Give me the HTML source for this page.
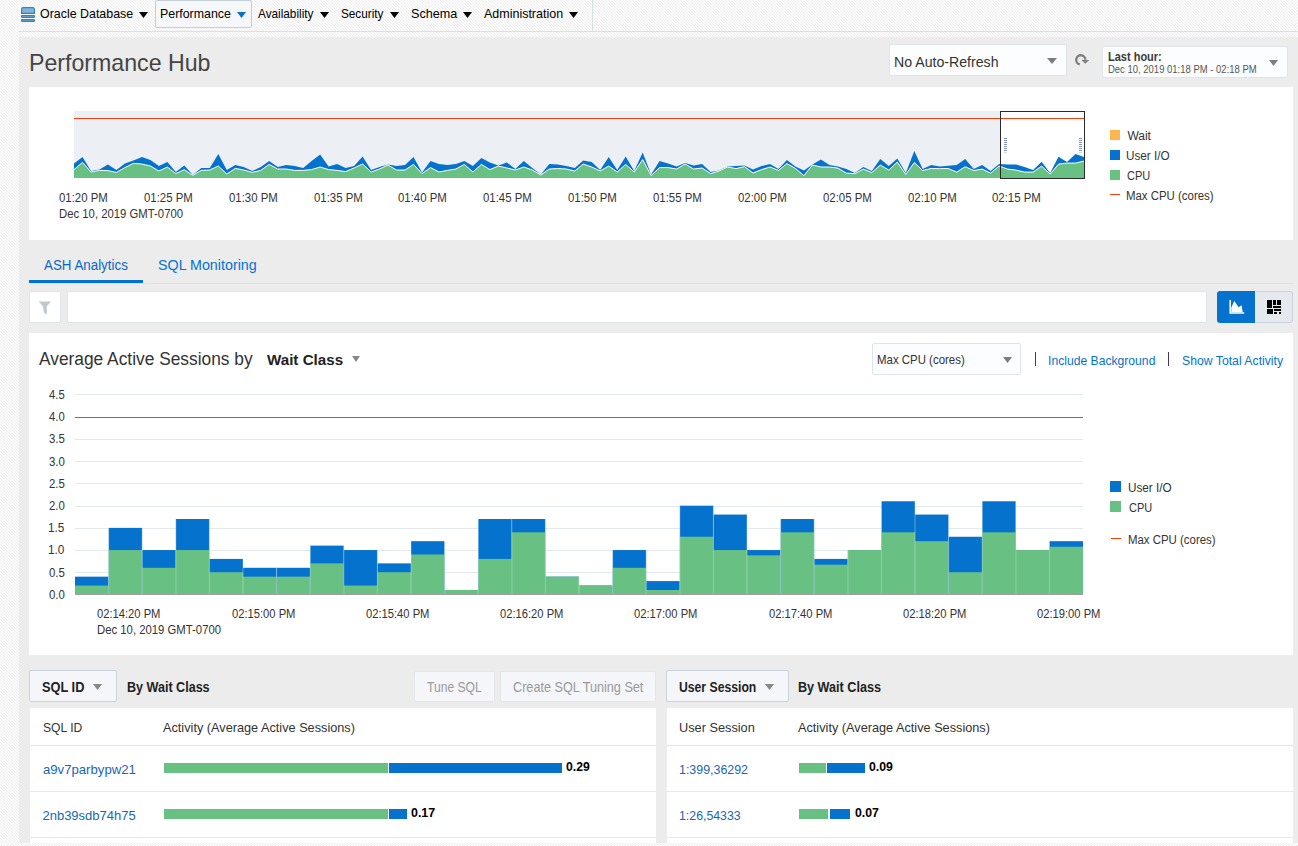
<!DOCTYPE html>
<html><head><meta charset="utf-8"><style>
html,body{margin:0;padding:0;width:1298px;height:846px;overflow:hidden;background:#fbfbfb}
.t{position:absolute;white-space:nowrap;line-height:1;font-family:"Liberation Sans",sans-serif;transform-origin:0 0}
.r{position:absolute;box-sizing:content-box}
</style></head><body>
<svg class="r" style="left:0;top:0" width="1298" height="846"><defs><pattern id="hat" width="3" height="3" patternUnits="userSpaceOnUse"><rect width="3" height="3" fill="#fcfcfc"/><rect x="2" y="0" width="1" height="1" fill="#ededed"/><rect x="0" y="1" width="1" height="1" fill="#ededed"/><rect x="1" y="2" width="1" height="1" fill="#ededed"/></pattern></defs><rect width="1298" height="846" fill="url(#hat)"/></svg>
<div class="r" style="left:19px;top:31px;width:1279px;height:1px;background:#d9e1e8;"></div>
<div class="r" style="left:592px;top:0px;width:1px;height:31px;background:#d9e1e8;"></div>
<svg class="r" style="left:21px;top:7px" width="14" height="15" viewBox="0 0 14 15"><path d="M0.6,6.4 L0.6,2.2 Q0.6,0.6 2.4,0.6 L11.6,0.6 Q13.4,0.6 13.4,2.2 L13.4,6.4 Z" fill="#7fb2e5" stroke="#38879f" stroke-width="1.2"/><rect x="0.6" y="8.6" width="12.8" height="1.7" rx="0.6" fill="#7fb2e5" stroke="#38879f" stroke-width="1.2"/><rect x="0.6" y="12.7" width="12.8" height="1.7" rx="0.6" fill="#7fb2e5" stroke="#38879f" stroke-width="1.2"/></svg>
<div class="t" style="left:39.52px;top:6.95px;font-size:13px;color:#000;transform:scaleX(0.9554);">Oracle Database</div>
<svg class="r" style="left:139px;top:12px" width="9" height="6"><polygon points="0,0 9,0 4.5,6" fill="#000"/></svg>
<div class="r" style="left:155px;top:0px;width:95px;height:26px;background:#f6f7f9;border:1px solid #c4ced7;border-radius:2px"></div>
<div class="t" style="left:159.55px;top:6.95px;font-size:13px;color:#000;transform:scaleX(0.9521);">Performance</div>
<svg class="r" style="left:237px;top:12px" width="9" height="6"><polygon points="0,0 9,0 4.5,6" fill="#0572ce"/></svg>
<div class="t" style="left:258.00px;top:6.95px;font-size:13px;color:#000;transform:scaleX(0.9061);">Availability</div>
<svg class="r" style="left:320px;top:12px" width="9" height="6"><polygon points="0,0 9,0 4.5,6" fill="#000"/></svg>
<div class="t" style="left:341.25px;top:6.95px;font-size:13px;color:#000;transform:scaleX(0.9032);">Security</div>
<svg class="r" style="left:390px;top:12px" width="9" height="6"><polygon points="0,0 9,0 4.5,6" fill="#000"/></svg>
<div class="t" style="left:410.52px;top:6.95px;font-size:13px;color:#000;transform:scaleX(0.9693);">Schema</div>
<svg class="r" style="left:463px;top:12px" width="9" height="6"><polygon points="0,0 9,0 4.5,6" fill="#000"/></svg>
<div class="t" style="left:484.00px;top:6.95px;font-size:13px;color:#000;transform:scaleX(0.9602);">Administration</div>
<svg class="r" style="left:569px;top:12px" width="9" height="6"><polygon points="0,0 9,0 4.5,6" fill="#000"/></svg>
<div class="r" style="left:19px;top:37px;width:1279px;height:806px;background:#ececec;"></div>
<div class="t" style="left:28.87px;top:50.60px;font-size:24px;color:#444;transform:scaleX(0.9649);">Performance Hub</div>
<div class="r" style="left:889px;top:44px;width:176px;height:30px;background:#fcfdfe;border:1px solid #dfe4e9;border-radius:2px"></div>
<div class="t" style="left:893.52px;top:53.55px;font-size:15px;color:#333;transform:scaleX(0.9425);">No Auto-Refresh</div>
<svg class="r" style="left:1047px;top:58px" width="10" height="6"><polygon points="0,0 10,0 5.0,6" fill="#7d7d7d"/></svg>
<svg class="r" style="left:1068px;top:48px" width="28" height="24" viewBox="0 0 28 24"><path d="M11.8,16.4 A4.6,4.6 0 1 1 17.4,11.6" fill="none" stroke="#808080" stroke-width="2.4"/><polygon points="13.4,12 21.2,12 17.3,15.8" fill="#808080"/></svg>
<div class="r" style="left:1102px;top:46px;width:184px;height:30px;background:#fcfdfe;border:1px solid #dfe4e9;border-radius:2px"></div>
<div class="t" style="left:1107.81px;top:50.60px;font-size:12px;color:#3a3a3a;font-weight:bold;transform:scaleX(0.9163);">Last hour:</div>
<div class="t" style="left:1107.64px;top:63.85px;font-size:11px;color:#555;transform:scaleX(0.8622);">Dec 10, 2019 01:18 PM - 02:18 PM</div>
<svg class="r" style="left:1269px;top:60px" width="9" height="6"><polygon points="0,0 9,0 4.5,6" fill="#7d7d7d"/></svg>
<div class="r" style="left:29px;top:87px;width:1264px;height:153px;background:#fff;"></div>
<div class="r" style="left:74px;top:111px;width:1010px;height:67px;background:#eceff4;"></div>
<div class="r" style="left:1000px;top:111px;width:84px;height:67px;background:#fff;"></div>
<svg class="r" style="left:74px;top:111px" width="1010" height="67"><polygon points="0.0,52.6 8.5,46.0 17.0,60.0 25.5,58.4 33.9,53.4 42.4,59.0 50.9,52.6 59.4,49.6 67.9,46.0 76.4,49.0 84.9,55.0 93.4,51.0 101.8,61.0 110.3,54.6 118.8,64.0 127.3,57.0 135.8,57.0 144.3,43.0 152.8,59.0 161.3,54.0 169.7,56.0 178.2,60.0 186.7,56.0 195.2,50.0 203.7,56.0 212.2,54.0 220.7,55.0 229.2,57.0 237.6,50.0 246.1,43.4 254.6,55.4 263.1,53.0 271.6,57.0 280.1,55.0 288.6,45.4 297.1,59.0 305.5,56.0 314.0,53.4 322.5,55.0 331.0,54.0 339.5,46.0 348.0,61.4 356.5,50.0 365.0,53.0 373.4,54.0 381.9,53.0 390.4,50.0 398.9,55.0 407.4,47.0 415.9,51.4 424.4,54.6 432.9,51.4 441.3,58.0 449.8,50.0 458.3,57.0 466.8,63.4 475.3,53.0 483.8,53.4 492.3,55.0 500.8,57.0 509.2,49.4 517.7,51.0 526.2,59.0 534.7,46.0 543.2,59.0 551.7,45.4 560.2,60.0 568.7,41.4 577.1,63.4 585.6,50.0 594.1,52.6 602.6,55.4 611.1,52.0 619.6,54.6 628.1,53.0 636.6,61.0 645.0,59.4 653.5,55.4 662.0,55.0 670.5,54.6 679.0,58.6 687.5,55.0 696.0,53.0 704.5,58.0 712.9,49.0 721.4,55.4 729.9,59.4 738.4,53.4 746.9,48.6 755.4,54.0 763.9,55.5 772.4,58.1 780.8,62.1 789.3,56.1 797.8,60.1 806.3,48.1 814.8,55.1 823.3,47.5 831.8,62.1 840.3,40.1 848.7,58.1 857.2,54.1 865.7,55.5 874.2,54.7 882.7,54.1 891.2,48.1 899.7,58.1 908.2,54.1 916.6,60.1 925.1,53.1 933.6,53.5 942.1,53.5 950.6,56.1 959.1,59.1 967.6,50.7 976.1,62.1 984.5,45.7 993.0,51.1 1001.5,43.1 1010.0,46.1 1010,67 0,67" fill="#0572ce"/><polygon points="0.0,58.6 8.5,51.4 17.0,61.0 25.5,59.4 33.9,59.6 42.4,61.4 50.9,56.6 59.4,52.4 67.9,53.0 76.4,55.0 84.9,60.0 93.4,56.0 101.8,62.6 110.3,58.6 118.8,64.4 127.3,59.4 135.8,59.0 144.3,55.0 152.8,63.0 161.3,57.4 169.7,59.0 178.2,61.4 186.7,59.4 195.2,53.4 203.7,58.0 212.2,58.0 220.7,59.4 229.2,59.4 237.6,58.6 246.1,56.0 254.6,58.6 263.1,59.4 271.6,60.6 280.1,57.0 288.6,53.0 297.1,61.0 305.5,58.0 314.0,54.0 322.5,59.0 331.0,59.0 339.5,53.4 348.0,62.6 356.5,56.6 365.0,61.0 373.4,59.4 381.9,58.0 390.4,53.4 398.9,61.0 407.4,53.4 415.9,58.6 424.4,55.0 432.9,57.0 441.3,59.0 449.8,56.0 458.3,59.0 466.8,64.0 475.3,58.0 483.8,57.6 492.3,58.0 500.8,60.0 509.2,53.0 517.7,56.0 526.2,60.0 534.7,55.0 543.2,61.0 551.7,53.4 560.2,61.0 568.7,48.6 577.1,64.6 585.6,56.6 594.1,56.6 602.6,58.0 611.1,53.0 619.6,58.0 628.1,57.0 636.6,62.6 645.0,60.0 653.5,56.0 662.0,57.6 670.5,55.6 679.0,62.0 687.5,58.6 696.0,56.0 704.5,59.4 712.9,52.6 721.4,57.4 729.9,64.6 738.4,54.0 746.9,56.0 755.4,56.0 763.9,57.1 772.4,62.1 780.8,62.7 789.3,58.1 797.8,61.5 806.3,54.1 814.8,59.1 823.3,51.1 831.8,63.5 840.3,51.5 848.7,59.5 857.2,57.5 865.7,57.7 874.2,57.5 882.7,61.1 891.2,55.7 899.7,59.5 908.2,58.1 916.6,62.1 925.1,55.1 933.6,58.1 942.1,59.1 950.6,61.1 959.1,61.1 967.6,55.1 976.1,63.1 984.5,53.1 993.0,52.1 1001.5,52.1 1010.0,50.1 1010,67 0,67" fill="#68c182"/><polyline points="0.0,58.6 8.5,51.4 17.0,61.0 25.5,59.4 33.9,59.6 42.4,61.4 50.9,56.6 59.4,52.4 67.9,53.0 76.4,55.0 84.9,60.0 93.4,56.0 101.8,62.6 110.3,58.6 118.8,64.4 127.3,59.4 135.8,59.0 144.3,55.0 152.8,63.0 161.3,57.4 169.7,59.0 178.2,61.4 186.7,59.4 195.2,53.4 203.7,58.0 212.2,58.0 220.7,59.4 229.2,59.4 237.6,58.6 246.1,56.0 254.6,58.6 263.1,59.4 271.6,60.6 280.1,57.0 288.6,53.0 297.1,61.0 305.5,58.0 314.0,54.0 322.5,59.0 331.0,59.0 339.5,53.4 348.0,62.6 356.5,56.6 365.0,61.0 373.4,59.4 381.9,58.0 390.4,53.4 398.9,61.0 407.4,53.4 415.9,58.6 424.4,55.0 432.9,57.0 441.3,59.0 449.8,56.0 458.3,59.0 466.8,64.0 475.3,58.0 483.8,57.6 492.3,58.0 500.8,60.0 509.2,53.0 517.7,56.0 526.2,60.0 534.7,55.0 543.2,61.0 551.7,53.4 560.2,61.0 568.7,48.6 577.1,64.6 585.6,56.6 594.1,56.6 602.6,58.0 611.1,53.0 619.6,58.0 628.1,57.0 636.6,62.6 645.0,60.0 653.5,56.0 662.0,57.6 670.5,55.6 679.0,62.0 687.5,58.6 696.0,56.0 704.5,59.4 712.9,52.6 721.4,57.4 729.9,64.6 738.4,54.0 746.9,56.0 755.4,56.0 763.9,57.1 772.4,62.1 780.8,62.7 789.3,58.1 797.8,61.5 806.3,54.1 814.8,59.1 823.3,51.1 831.8,63.5 840.3,51.5 848.7,59.5 857.2,57.5 865.7,57.7 874.2,57.5 882.7,61.1 891.2,55.7 899.7,59.5 908.2,58.1 916.6,62.1 925.1,55.1 933.6,58.1 942.1,59.1 950.6,61.1 959.1,61.1 967.6,55.1 976.1,63.1 984.5,53.1 993.0,52.1 1001.5,52.1 1010.0,50.1" fill="none" stroke="#fff" stroke-width="1"/><rect x="0" y="7" width="1010" height="1" fill="#f53d0e"/></svg>
<div class="r" style="left:1000px;top:111px;width:83px;height:66px;border:1px solid #2a2a2a"></div>
<svg class="r" style="left:1004px;top:138px" width="78" height="16" shape-rendering="crispEdges"><rect x="0" y="0" width="3" height="1" fill="#8391c9"/><rect x="75" y="0" width="3" height="1" fill="#8391c9"/><rect x="0" y="2" width="3" height="1" fill="#8391c9"/><rect x="75" y="2" width="3" height="1" fill="#8391c9"/><rect x="0" y="4" width="3" height="1" fill="#8391c9"/><rect x="75" y="4" width="3" height="1" fill="#8391c9"/><rect x="0" y="6" width="3" height="1" fill="#8391c9"/><rect x="75" y="6" width="3" height="1" fill="#8391c9"/><rect x="0" y="8" width="3" height="1" fill="#8391c9"/><rect x="75" y="8" width="3" height="1" fill="#8391c9"/><rect x="0" y="10" width="3" height="1" fill="#8391c9"/><rect x="75" y="10" width="3" height="1" fill="#8391c9"/><rect x="0" y="12" width="3" height="1" fill="#8391c9"/><rect x="75" y="12" width="3" height="1" fill="#8391c9"/><rect x="0" y="14" width="3" height="1" fill="#d6d8e0"/><rect x="75" y="14" width="3" height="1" fill="#d6d8e0"/></svg>
<div class="t" style="left:59.02px;top:191.50px;font-size:12px;color:#333;transform:scaleX(0.9500);">01:20 PM</div>
<div class="t" style="left:143.88px;top:191.50px;font-size:12px;color:#333;transform:scaleX(0.9500);">01:25 PM</div>
<div class="t" style="left:228.72px;top:191.50px;font-size:12px;color:#333;transform:scaleX(0.9500);">01:30 PM</div>
<div class="t" style="left:313.57px;top:191.50px;font-size:12px;color:#333;transform:scaleX(0.9500);">01:35 PM</div>
<div class="t" style="left:398.42px;top:191.50px;font-size:12px;color:#333;transform:scaleX(0.9500);">01:40 PM</div>
<div class="t" style="left:483.27px;top:191.50px;font-size:12px;color:#333;transform:scaleX(0.9500);">01:45 PM</div>
<div class="t" style="left:568.12px;top:191.50px;font-size:12px;color:#333;transform:scaleX(0.9500);">01:50 PM</div>
<div class="t" style="left:652.97px;top:191.50px;font-size:12px;color:#333;transform:scaleX(0.9500);">01:55 PM</div>
<div class="t" style="left:737.82px;top:191.50px;font-size:12px;color:#333;transform:scaleX(0.9500);">02:00 PM</div>
<div class="t" style="left:822.67px;top:191.50px;font-size:12px;color:#333;transform:scaleX(0.9500);">02:05 PM</div>
<div class="t" style="left:907.52px;top:191.50px;font-size:12px;color:#333;transform:scaleX(0.9500);">02:10 PM</div>
<div class="t" style="left:992.37px;top:191.50px;font-size:12px;color:#333;transform:scaleX(0.9500);">02:15 PM</div>
<div class="t" style="left:58.56px;top:207.80px;font-size:12px;color:#333;transform:scaleX(0.9438);">Dec 10, 2019 GMT-0700</div>
<div class="r" style="left:1110px;top:130px;width:10px;height:10px;background:#ffb54d;"></div>
<div class="r" style="left:1110px;top:150px;width:10px;height:10px;background:#0572ce;"></div>
<div class="r" style="left:1110px;top:170px;width:10px;height:10px;background:#68c182;"></div>
<div class="r" style="left:1110px;top:194px;width:10px;height:1px;background:#f53d0e;"></div>
<div class="t" style="left:1127.40px;top:129.50px;font-size:12px;color:#333;">Wait</div>
<div class="t" style="left:1126.42px;top:149.50px;font-size:12px;color:#333;transform:scaleX(0.9767);">User I/O</div>
<div class="t" style="left:1126.94px;top:169.50px;font-size:12px;color:#333;transform:scaleX(0.9167);">CPU</div>
<div class="t" style="left:1126.45px;top:189.50px;font-size:12px;color:#333;transform:scaleX(0.9518);">Max CPU (cores)</div>
<div class="t" style="left:44.40px;top:258.10px;font-size:14px;color:#0a68c4;transform:scaleX(0.9531);">ASH Analytics</div>
<div class="t" style="left:157.53px;top:258.10px;font-size:14px;color:#0572ce;transform:scaleX(1.0205);">SQL Monitoring</div>
<div class="r" style="left:29px;top:283px;width:1264px;height:1px;background:#d9e1e8;"></div>
<div class="r" style="left:29px;top:280px;width:114px;height:3px;background:#0572ce;"></div>
<div class="r" style="left:29px;top:291px;width:30px;height:30px;background:#fff;border:1px solid #dfe4e9;border-radius:2px"></div>
<svg class="r" style="left:38px;top:301px" width="14" height="14" viewBox="0 0 14 14"><path d="M0.6,0.5 L13.1,0.5 L8.8,5.3 L8.8,13 L7.4,13 L5.6,10.6 L5.1,5.6 Z" fill="#c2c8ce"/></svg>
<div class="r" style="left:67px;top:291px;width:1138px;height:30px;background:#fff;border:1px solid #dfe4e9;border-radius:2px"></div>
<div class="r" style="left:1217px;top:291px;width:38px;height:32px;background:#0572ce;border-radius:3px 0 0 3px"></div>
<div class="r" style="left:1255px;top:291px;width:37px;height:30px;background:#e5e9ee;border:1px solid #c9d3dc;border-left:none;border-radius:0 3px 3px 0"></div>
<svg class="r" style="left:1229px;top:299px" width="17" height="16" viewBox="0 0 17 16"><path d="M1.2,0.9 L1.2,14 L15.2,14" fill="none" stroke="#fff" stroke-width="1.5"/><path d="M2.3,13.3 L2.3,8.5 L5.3,2 L9.6,8.2 L12.6,6.2 L13.7,13.3 Z" fill="#fff"/></svg>
<svg class="r" style="left:1267px;top:300px" width="14" height="14" viewBox="0 0 14 14" shape-rendering="crispEdges"><rect x="0" y="0" width="5" height="8" fill="#000"/><rect x="6" y="0" width="3" height="4.5" fill="#000"/><rect x="10" y="0" width="4" height="4.5" fill="#000"/><rect x="6" y="5.5" width="8" height="2.2" fill="#000"/><rect x="0" y="9" width="6" height="5" fill="#000"/><rect x="7" y="9" width="7" height="2" fill="#000"/><rect x="7" y="12" width="3.2" height="2" fill="#000"/><rect x="11.8" y="12" width="2.2" height="2" fill="#000"/></svg>
<div class="r" style="left:29px;top:333px;width:1264px;height:322px;background:#fff;"></div>
<div class="t" style="left:39.40px;top:349.90px;font-size:18px;color:#333;transform:scaleX(0.9632);">Average Active Sessions by</div>
<div class="t" style="left:266.70px;top:351.95px;font-size:15px;color:#222;font-weight:bold;transform:scaleX(1.0100);">Wait Class</div>
<svg class="r" style="left:352px;top:356px" width="8" height="6"><polygon points="0,0 8,0 4.0,6" fill="#888"/></svg>
<div class="r" style="left:872px;top:343px;width:147px;height:30px;background:#fcfdfe;border:1px solid #dfe4e9;border-radius:2px"></div>
<div class="t" style="left:877.12px;top:352.95px;font-size:13px;color:#333;transform:scaleX(0.8798);">Max CPU (cores)</div>
<svg class="r" style="left:1003px;top:357px" width="9" height="6"><polygon points="0,0 9,0 4.5,6" fill="#7d7d7d"/></svg>
<div class="r" style="left:1035px;top:352px;width:1px;height:14px;background:#5a2d4a;"></div>
<div class="r" style="left:1168px;top:352px;width:1px;height:14px;background:#5a2d4a;"></div>
<div class="t" style="left:1047.83px;top:353.65px;font-size:13px;color:#0572ce;transform:scaleX(0.9345);">Include Background</div>
<div class="t" style="left:1181.83px;top:353.65px;font-size:13px;color:#0572ce;transform:scaleX(0.9411);">Show Total Activity</div>
<svg class="r" style="left:0;top:0" width="1298" height="846"><rect x="75" y="572" width="1008" height="1" fill="#e3e8ee"/><rect x="75" y="550" width="1008" height="1" fill="#e3e8ee"/><rect x="75" y="528" width="1008" height="1" fill="#e3e8ee"/><rect x="75" y="506" width="1008" height="1" fill="#e3e8ee"/><rect x="75" y="483" width="1008" height="1" fill="#e3e8ee"/><rect x="75" y="461" width="1008" height="1" fill="#e3e8ee"/><rect x="75" y="439" width="1008" height="1" fill="#e3e8ee"/><rect x="75" y="417" width="1008" height="1" fill="#e3e8ee"/><rect x="75" y="394" width="1008" height="1" fill="#e3e8ee"/><rect x="75.00" y="576.66" width="33.60" height="17.74" fill="#0572ce"/><rect x="75.00" y="585.53" width="33.60" height="8.87" fill="#68c182"/><rect x="108.60" y="527.88" width="33.60" height="66.52" fill="#0572ce"/><rect x="108.60" y="550.05" width="33.60" height="44.35" fill="#68c182"/><rect x="142.20" y="550.05" width="33.60" height="44.35" fill="#0572ce"/><rect x="142.20" y="567.79" width="33.60" height="26.61" fill="#68c182"/><rect x="175.80" y="519.00" width="33.60" height="75.39" fill="#0572ce"/><rect x="175.80" y="550.05" width="33.60" height="44.35" fill="#68c182"/><rect x="209.40" y="558.92" width="33.60" height="35.48" fill="#0572ce"/><rect x="209.40" y="572.23" width="33.60" height="22.17" fill="#68c182"/><rect x="243.00" y="567.79" width="33.60" height="26.61" fill="#0572ce"/><rect x="243.00" y="576.66" width="33.60" height="17.74" fill="#68c182"/><rect x="276.60" y="567.79" width="33.60" height="26.61" fill="#0572ce"/><rect x="276.60" y="576.66" width="33.60" height="17.74" fill="#68c182"/><rect x="310.20" y="545.62" width="33.60" height="48.78" fill="#0572ce"/><rect x="310.20" y="563.36" width="33.60" height="31.04" fill="#68c182"/><rect x="343.80" y="550.05" width="33.60" height="44.35" fill="#0572ce"/><rect x="343.80" y="585.53" width="33.60" height="8.87" fill="#68c182"/><rect x="377.40" y="563.36" width="33.60" height="31.04" fill="#0572ce"/><rect x="377.40" y="572.23" width="33.60" height="22.17" fill="#68c182"/><rect x="411.00" y="541.18" width="33.60" height="53.22" fill="#0572ce"/><rect x="411.00" y="554.49" width="33.60" height="39.91" fill="#68c182"/><rect x="444.60" y="589.97" width="33.60" height="4.43" fill="#0572ce"/><rect x="444.60" y="589.97" width="33.60" height="4.43" fill="#68c182"/><rect x="478.20" y="519.00" width="33.60" height="75.39" fill="#0572ce"/><rect x="478.20" y="558.92" width="33.60" height="35.48" fill="#68c182"/><rect x="511.80" y="519.00" width="33.60" height="75.39" fill="#0572ce"/><rect x="511.80" y="532.31" width="33.60" height="62.09" fill="#68c182"/><rect x="545.40" y="576.66" width="33.60" height="17.74" fill="#0572ce"/><rect x="545.40" y="576.66" width="33.60" height="17.74" fill="#68c182"/><rect x="579.00" y="585.53" width="33.60" height="8.87" fill="#0572ce"/><rect x="579.00" y="585.53" width="33.60" height="8.87" fill="#68c182"/><rect x="612.60" y="550.05" width="33.60" height="44.35" fill="#0572ce"/><rect x="612.60" y="567.79" width="33.60" height="26.61" fill="#68c182"/><rect x="646.20" y="581.10" width="33.60" height="13.30" fill="#0572ce"/><rect x="646.20" y="589.97" width="33.60" height="4.43" fill="#68c182"/><rect x="679.80" y="505.70" width="33.60" height="88.70" fill="#0572ce"/><rect x="679.80" y="536.75" width="33.60" height="57.65" fill="#68c182"/><rect x="713.40" y="514.57" width="33.60" height="79.83" fill="#0572ce"/><rect x="713.40" y="550.05" width="33.60" height="44.35" fill="#68c182"/><rect x="747.00" y="550.05" width="33.60" height="44.35" fill="#0572ce"/><rect x="747.00" y="555.37" width="33.60" height="39.03" fill="#68c182"/><rect x="780.60" y="519.00" width="33.60" height="75.39" fill="#0572ce"/><rect x="780.60" y="532.31" width="33.60" height="62.09" fill="#68c182"/><rect x="814.20" y="558.92" width="33.60" height="35.48" fill="#0572ce"/><rect x="814.20" y="564.69" width="33.60" height="29.71" fill="#68c182"/><rect x="847.80" y="550.05" width="33.60" height="44.35" fill="#0572ce"/><rect x="847.80" y="550.05" width="33.60" height="44.35" fill="#68c182"/><rect x="881.40" y="501.26" width="33.60" height="93.13" fill="#0572ce"/><rect x="881.40" y="532.31" width="33.60" height="62.09" fill="#68c182"/><rect x="915.00" y="514.57" width="33.60" height="79.83" fill="#0572ce"/><rect x="915.00" y="541.18" width="33.60" height="53.22" fill="#68c182"/><rect x="948.60" y="536.75" width="33.60" height="57.65" fill="#0572ce"/><rect x="948.60" y="572.23" width="33.60" height="22.17" fill="#68c182"/><rect x="982.20" y="501.26" width="33.60" height="93.13" fill="#0572ce"/><rect x="982.20" y="532.31" width="33.60" height="62.09" fill="#68c182"/><rect x="1015.80" y="550.05" width="33.60" height="44.35" fill="#0572ce"/><rect x="1015.80" y="550.05" width="33.60" height="44.35" fill="#68c182"/><rect x="1049.40" y="541.18" width="33.60" height="53.22" fill="#0572ce"/><rect x="1049.40" y="546.72" width="33.60" height="47.68" fill="#68c182"/><rect x="108.10" y="527.88" width="1" height="66.53" fill="#ffffff" fill-opacity="0.35"/><rect x="141.70" y="527.88" width="1" height="66.53" fill="#ffffff" fill-opacity="0.35"/><rect x="175.30" y="519.00" width="1" height="75.39" fill="#ffffff" fill-opacity="0.35"/><rect x="208.90" y="519.00" width="1" height="75.39" fill="#ffffff" fill-opacity="0.35"/><rect x="242.50" y="558.92" width="1" height="35.48" fill="#ffffff" fill-opacity="0.35"/><rect x="276.10" y="567.79" width="1" height="26.61" fill="#ffffff" fill-opacity="0.35"/><rect x="309.70" y="545.62" width="1" height="48.79" fill="#ffffff" fill-opacity="0.35"/><rect x="343.30" y="545.62" width="1" height="48.79" fill="#ffffff" fill-opacity="0.35"/><rect x="376.90" y="550.05" width="1" height="44.35" fill="#ffffff" fill-opacity="0.35"/><rect x="410.50" y="541.18" width="1" height="53.22" fill="#ffffff" fill-opacity="0.35"/><rect x="444.10" y="541.18" width="1" height="53.22" fill="#ffffff" fill-opacity="0.35"/><rect x="477.70" y="519.00" width="1" height="75.39" fill="#ffffff" fill-opacity="0.35"/><rect x="511.30" y="519.00" width="1" height="75.39" fill="#ffffff" fill-opacity="0.35"/><rect x="544.90" y="519.00" width="1" height="75.39" fill="#ffffff" fill-opacity="0.35"/><rect x="578.50" y="576.66" width="1" height="17.74" fill="#ffffff" fill-opacity="0.35"/><rect x="612.10" y="550.05" width="1" height="44.35" fill="#ffffff" fill-opacity="0.35"/><rect x="645.70" y="550.05" width="1" height="44.35" fill="#ffffff" fill-opacity="0.35"/><rect x="679.30" y="505.70" width="1" height="88.70" fill="#ffffff" fill-opacity="0.35"/><rect x="712.90" y="505.70" width="1" height="88.70" fill="#ffffff" fill-opacity="0.35"/><rect x="746.50" y="514.57" width="1" height="79.83" fill="#ffffff" fill-opacity="0.35"/><rect x="780.10" y="519.00" width="1" height="75.39" fill="#ffffff" fill-opacity="0.35"/><rect x="813.70" y="519.00" width="1" height="75.39" fill="#ffffff" fill-opacity="0.35"/><rect x="847.30" y="550.05" width="1" height="44.35" fill="#ffffff" fill-opacity="0.35"/><rect x="880.90" y="501.26" width="1" height="93.14" fill="#ffffff" fill-opacity="0.35"/><rect x="914.50" y="501.26" width="1" height="93.14" fill="#ffffff" fill-opacity="0.35"/><rect x="948.10" y="514.57" width="1" height="79.83" fill="#ffffff" fill-opacity="0.35"/><rect x="981.70" y="501.26" width="1" height="93.14" fill="#ffffff" fill-opacity="0.35"/><rect x="1015.30" y="501.26" width="1" height="93.14" fill="#ffffff" fill-opacity="0.35"/><rect x="1048.90" y="541.18" width="1" height="53.22" fill="#ffffff" fill-opacity="0.35"/><rect x="75" y="417" width="1008" height="1" fill="#f53d0e"/><rect x="75" y="594" width="1008" height="1" fill="#a0a0a0"/></svg>
<div class="t" style="left:48.52px;top:588.70px;font-size:12px;color:#333;transform:scaleX(0.9524);">0.0</div>
<div class="t" style="left:48.52px;top:566.52px;font-size:12px;color:#333;transform:scaleX(0.9524);">0.5</div>
<div class="t" style="left:48.02px;top:544.35px;font-size:12px;color:#333;transform:scaleX(0.9836);">1.0</div>
<div class="t" style="left:48.02px;top:522.17px;font-size:12px;color:#333;transform:scaleX(0.9836);">1.5</div>
<div class="t" style="left:48.52px;top:500.00px;font-size:12px;color:#333;transform:scaleX(0.9524);">2.0</div>
<div class="t" style="left:48.52px;top:477.82px;font-size:12px;color:#333;transform:scaleX(0.9524);">2.5</div>
<div class="t" style="left:48.52px;top:455.65px;font-size:12px;color:#333;transform:scaleX(0.9524);">3.0</div>
<div class="t" style="left:48.52px;top:433.47px;font-size:12px;color:#333;transform:scaleX(0.9524);">3.5</div>
<div class="t" style="left:48.77px;top:411.30px;font-size:12px;color:#333;transform:scaleX(0.9375);">4.0</div>
<div class="t" style="left:48.77px;top:389.12px;font-size:12px;color:#333;transform:scaleX(0.9375);">4.5</div>
<div class="t" style="left:97.33px;top:607.70px;font-size:12px;color:#333;transform:scaleX(0.9323);">02:14:20 PM</div>
<div class="t" style="left:231.60px;top:607.70px;font-size:12px;color:#333;transform:scaleX(0.9323);">02:15:00 PM</div>
<div class="t" style="left:365.87px;top:607.70px;font-size:12px;color:#333;transform:scaleX(0.9323);">02:15:40 PM</div>
<div class="t" style="left:500.14px;top:607.70px;font-size:12px;color:#333;transform:scaleX(0.9323);">02:16:20 PM</div>
<div class="t" style="left:634.41px;top:607.70px;font-size:12px;color:#333;transform:scaleX(0.9323);">02:17:00 PM</div>
<div class="t" style="left:768.68px;top:607.70px;font-size:12px;color:#333;transform:scaleX(0.9323);">02:17:40 PM</div>
<div class="t" style="left:902.95px;top:607.70px;font-size:12px;color:#333;transform:scaleX(0.9323);">02:18:20 PM</div>
<div class="t" style="left:1037.22px;top:607.70px;font-size:12px;color:#333;transform:scaleX(0.9323);">02:19:00 PM</div>
<div class="t" style="left:96.86px;top:624.40px;font-size:12px;color:#333;transform:scaleX(0.9438);">Dec 10, 2019 GMT-0700</div>
<div class="r" style="left:1110px;top:481px;width:11px;height:11px;background:#0572ce;"></div>
<div class="r" style="left:1110px;top:501px;width:11px;height:11px;background:#68c182;"></div>
<div class="r" style="left:1111px;top:538px;width:10px;height:1px;background:#f53d0e;"></div>
<div class="t" style="left:1128.02px;top:481.80px;font-size:12px;color:#333;transform:scaleX(0.9767);">User I/O</div>
<div class="t" style="left:1128.54px;top:501.80px;font-size:12px;color:#333;transform:scaleX(0.9167);">CPU</div>
<div class="t" style="left:1128.05px;top:533.80px;font-size:12px;color:#333;transform:scaleX(0.9518);">Max CPU (cores)</div>
<div class="r" style="left:29px;top:670px;width:86px;height:30px;background:#f4f6f9;border:1px solid #c9d3dc;border-radius:2px"></div>
<div class="t" style="left:41.54px;top:680.40px;font-size:14px;color:#222;font-weight:bold;transform:scaleX(0.9127);">SQL ID</div>
<svg class="r" style="left:93px;top:684px" width="9" height="6"><polygon points="0,0 9,0 4.5,6" fill="#888"/></svg>
<div class="t" style="left:126.60px;top:680.40px;font-size:14px;color:#222;font-weight:bold;transform:scaleX(0.8972);">By Wait Class</div>
<div class="r" style="left:414px;top:671px;width:79px;height:29px;background:#f4f6f9;border:1px solid #e1e6eb;border-radius:2px"></div>
<div class="t" style="left:427.08px;top:680.40px;font-size:14px;color:#9a9a9a;transform:scaleX(0.8640);">Tune SQL</div>
<div class="r" style="left:500px;top:671px;width:154px;height:29px;background:#f4f6f9;border:1px solid #e1e6eb;border-radius:2px"></div>
<div class="t" style="left:512.52px;top:680.40px;font-size:14px;color:#9a9a9a;transform:scaleX(0.9040);">Create SQL Tuning Set</div>
<div class="r" style="left:666px;top:670px;width:121px;height:30px;background:#f4f6f9;border:1px solid #c9d3dc;border-radius:2px"></div>
<div class="t" style="left:678.95px;top:680.40px;font-size:14px;color:#222;font-weight:bold;transform:scaleX(0.8711);">User Session</div>
<svg class="r" style="left:765px;top:684px" width="9" height="6"><polygon points="0,0 9,0 4.5,6" fill="#888"/></svg>
<div class="t" style="left:798.40px;top:680.40px;font-size:14px;color:#222;font-weight:bold;transform:scaleX(0.9006);">By Wait Class</div>
<div class="r" style="left:30px;top:708px;width:626px;height:135px;background:#fff;"></div>
<div class="r" style="left:30px;top:745px;width:626px;height:1px;background:#e0e5e9;"></div>
<div class="r" style="left:30px;top:791px;width:626px;height:1px;background:#e8e8e8;"></div>
<div class="r" style="left:30px;top:837px;width:626px;height:1px;background:#e8e8e8;"></div>
<div class="t" style="left:42.73px;top:721.35px;font-size:13px;color:#333;transform:scaleX(0.9317);">SQL ID</div>
<div class="t" style="left:163.30px;top:721.35px;font-size:13px;color:#333;transform:scaleX(0.9780);">Activity (Average Active Sessions)</div>
<div class="t" style="left:42.69px;top:762.95px;font-size:13px;color:#1767b5;transform:scaleX(1.0110);">a9v7parbypw21</div>
<div class="r" style="left:164px;top:763px;width:224px;height:10px;background:#68c182;"></div>
<div class="r" style="left:389px;top:763px;width:173px;height:10px;background:#0572ce;"></div>
<div class="t" style="left:566.09px;top:761.00px;font-size:12px;color:#000;font-weight:bold;transform:scaleX(1.0178);">0.29</div>
<div class="t" style="left:42.45px;top:808.95px;font-size:13px;color:#1767b5;">2nb39sdb74h75</div>
<div class="r" style="left:164px;top:809px;width:224px;height:10px;background:#68c182;"></div>
<div class="r" style="left:389px;top:809px;width:18px;height:10px;background:#0572ce;"></div>
<div class="t" style="left:410.68px;top:807.00px;font-size:12px;color:#000;font-weight:bold;transform:scaleX(1.0356);">0.17</div>
<div class="r" style="left:667px;top:708px;width:626px;height:135px;background:#fff;"></div>
<div class="r" style="left:667px;top:745px;width:626px;height:1px;background:#e0e5e9;"></div>
<div class="r" style="left:667px;top:791px;width:626px;height:1px;background:#e8e8e8;"></div>
<div class="r" style="left:667px;top:837px;width:626px;height:1px;background:#e8e8e8;"></div>
<div class="t" style="left:679.42px;top:721.35px;font-size:13px;color:#333;transform:scaleX(0.9801);">User Session</div>
<div class="t" style="left:798.30px;top:721.35px;font-size:13px;color:#333;transform:scaleX(0.9780);">Activity (Average Active Sessions)</div>
<div class="t" style="left:679.45px;top:762.95px;font-size:13px;color:#1767b5;transform:scaleX(0.9546);">1:399,36292</div>
<div class="r" style="left:799px;top:763px;width:27px;height:10px;background:#68c182;"></div>
<div class="r" style="left:827px;top:763px;width:38px;height:10px;background:#0572ce;"></div>
<div class="t" style="left:868.89px;top:761.00px;font-size:12px;color:#000;font-weight:bold;transform:scaleX(1.0222);">0.09</div>
<div class="t" style="left:679.45px;top:808.95px;font-size:13px;color:#1767b5;transform:scaleX(0.9480);">1:26,54333</div>
<div class="r" style="left:799px;top:809px;width:29px;height:10px;background:#68c182;"></div>
<div class="r" style="left:829.5px;top:809px;width:20.5px;height:10px;background:#0572ce;"></div>
<div class="t" style="left:854.69px;top:807.00px;font-size:12px;color:#000;font-weight:bold;transform:scaleX(1.0222);">0.07</div>
</body></html>
